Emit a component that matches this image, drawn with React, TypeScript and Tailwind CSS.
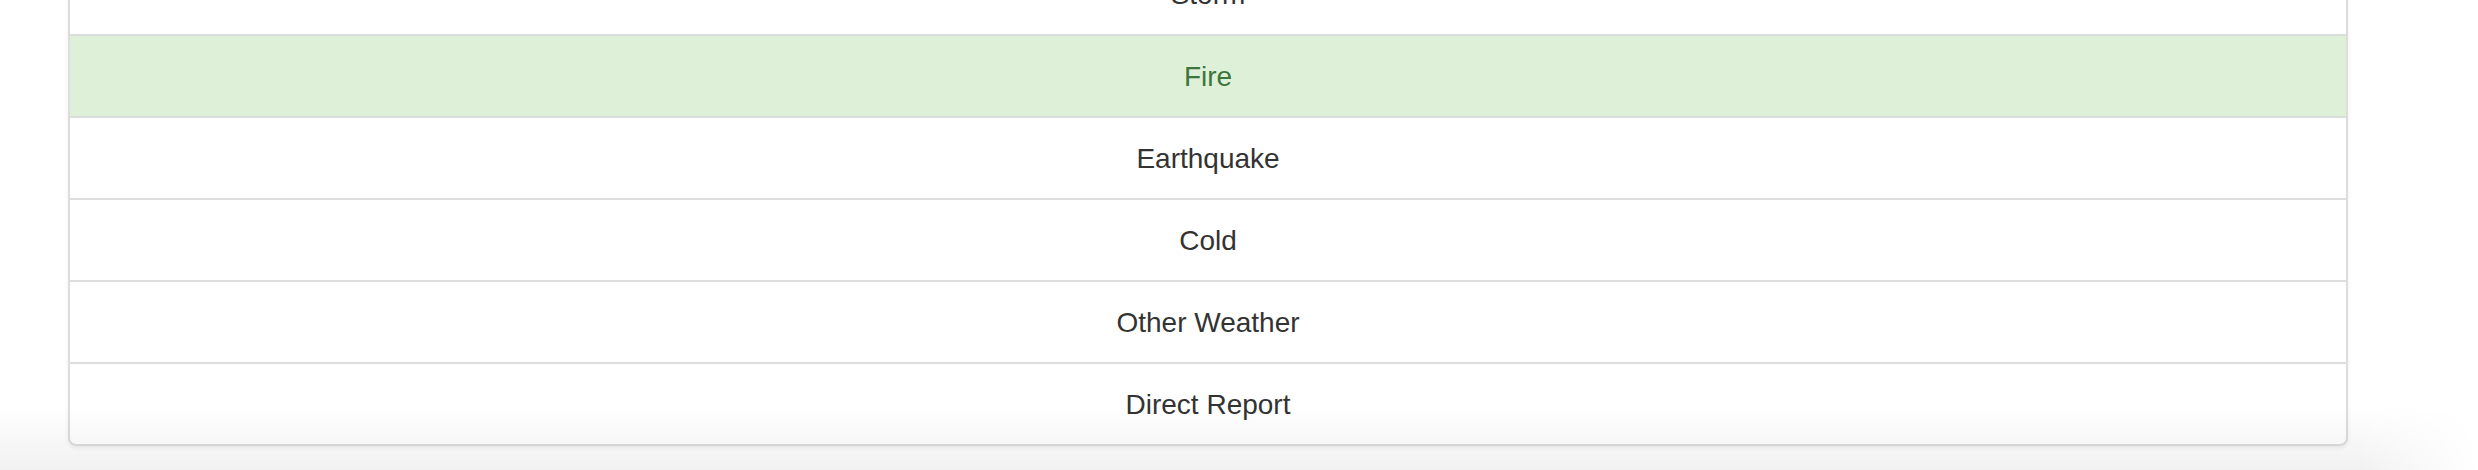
const items = [
  { label: "Storm" },
  { label: "Fire", success: true },
  { label: "Earthquake" },
  { label: "Cold" },
  { label: "Other Weather" },
  { label: "Direct Report" },
];

export default function App() {
  return (
    <div className="relative h-[470px] w-full overflow-hidden bg-white font-['Liberation_Sans',Arial,sans-serif]">
      <ul className="ml-[68px] mt-[-48px] w-[2280px] rounded-[8px] shadow-[0_2px_4px_rgba(0,0,0,0.075)]">
        {items.map((item, i) => (
          <li
            key={item.label}
            className={
              "relative -mb-[2px] block border-2 border-[#dddddd] px-[30px] pt-[21px] pb-[19px] text-center text-[28px] leading-[40px] " +
              (item.success ? "bg-[#dff0d8] text-[#3c763d] " : "bg-white text-[#333333] ") +
              (i === 0 ? "rounded-t-[8px] " : "") +
              (i === items.length - 1 ? "mb-0 rounded-b-[8px]" : "")
            }
          >
            {item.label}
          </li>
        ))}
      </ul>

      {/* soft window shadow along the bottom edge */}
      <div className="pointer-events-none absolute inset-x-0 bottom-0 h-[64px] bg-gradient-to-b from-black/0 to-black/[0.055] [mask-image:linear-gradient(to_left,transparent,black_120px)]" />
    </div>
  );
}
